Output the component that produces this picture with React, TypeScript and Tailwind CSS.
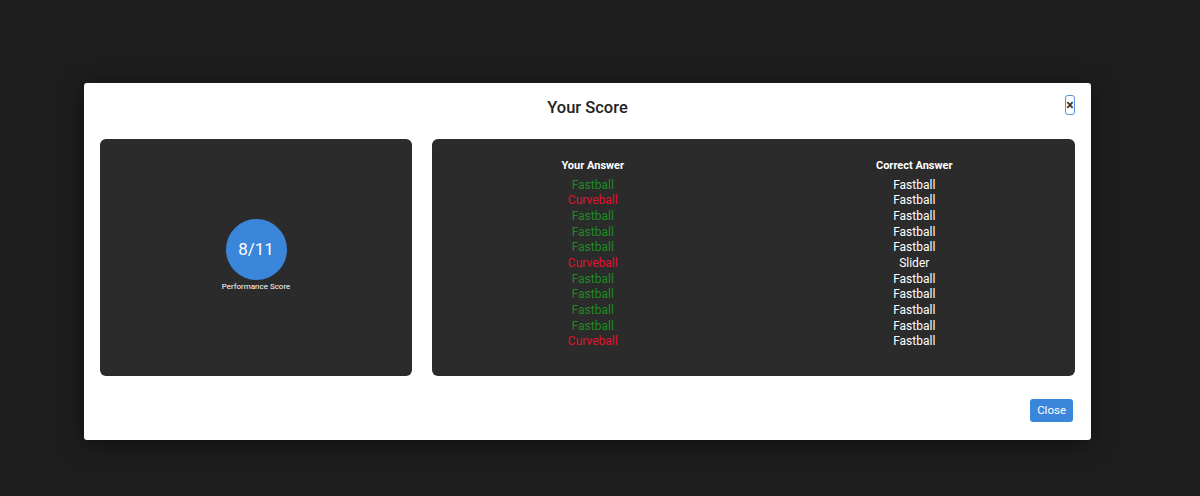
const rows: [string, string][] = [
  ["Fastball", "Fastball"],
  ["Curveball", "Fastball"],
  ["Fastball", "Fastball"],
  ["Fastball", "Fastball"],
  ["Fastball", "Fastball"],
  ["Curveball", "Slider"],
  ["Fastball", "Fastball"],
  ["Fastball", "Fastball"],
  ["Fastball", "Fastball"],
  ["Fastball", "Fastball"],
  ["Curveball", "Fastball"],
];

export default function App() {
  return (
    <div
      className="h-[496px] w-full bg-[#1e1e1e] pt-[83px]"
      style={{ fontFamily: "Roboto, 'Liberation Sans', sans-serif" }}
    >
      <div className="mx-[84px] h-[357px] w-[1007px] rounded-[3px] bg-white shadow-[0_4px_24px_rgba(0,0,0,0.5)] px-4 pt-[13px]">
        <div className="relative flex h-[24px] items-center justify-center">
          <h2 className="text-[16.5px] font-medium text-[#222]">Your Score</h2>
          <button className="absolute right-[0px] top-[-1px] flex h-[20px] w-[10px] items-center justify-center rounded-[3px] border border-[#5b8fd6] text-[14px] font-bold leading-none text-[#333]">
            ×
          </button>
        </div>

        <div className="mt-[19px] flex gap-5">
          <div className="flex h-[237px] w-[312px] flex-col items-center justify-center rounded-md bg-[#2b2b2b]">
            <div className="mt-[-3px] flex h-[61px] w-[61px] items-center justify-center rounded-full bg-[#3a86da] text-[17px] text-white">
              8/11
            </div>
            <div className="mt-[1px] text-[8px] text-white">Performance Score</div>
          </div>

          <div className="h-[237px] flex-1 rounded-md bg-[#2b2b2b] pt-[19px]">
            <div className="grid grid-cols-2 text-center">
              <div className="mb-[3px] text-[11px] font-bold text-white">Your Answer</div>
              <div className="mb-[3px] text-[11px] font-bold text-white">Correct Answer</div>
              {rows.map(([a, c], i) => (
                <div key={i} className="contents">
                  <div
                    className={
                      "h-[15.7px] text-[12px] leading-[15.7px] " +
                      (a === c ? "text-[#1f8a24]" : "text-[#e4102e]")
                    }
                  >
                    {a}
                  </div>
                  <div className="h-[15.7px] text-[12px] leading-[15.7px] text-white">{c}</div>
                </div>
              ))}
            </div>
          </div>
        </div>

        <div className="mt-[23px] flex justify-end pr-[2px]">
          <button className="h-[23px] rounded-[3px] bg-[#3a86da] px-[7px] text-[11.5px] text-white">
            Close
          </button>
        </div>
      </div>
    </div>
  );
}
